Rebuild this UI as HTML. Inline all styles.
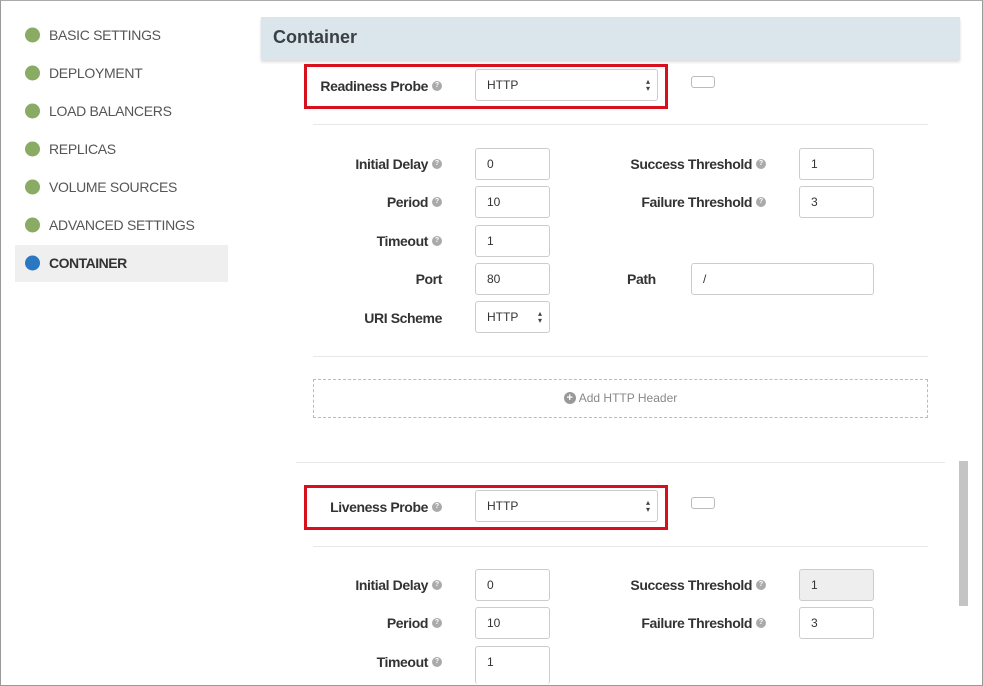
<!DOCTYPE html>
<html><head><meta charset="utf-8"><style>
*{box-sizing:border-box;margin:0;padding:0}
body{width:983px;height:686px;background:#fff;font-family:"Liberation Sans",sans-serif;position:relative;overflow:hidden}
.frame{position:absolute;left:0;top:0;width:983px;height:686px;border:1px solid #999;border-top-color:#aaa}
.a{position:absolute}
.nav{position:absolute;left:49px;font-size:14px;color:#555;letter-spacing:-0.3px;transform:translateY(-50%)}
.dot{position:absolute;left:25px;width:15px;height:15px;border-radius:50%;background:#8aab64;transform:translateY(-50%)}
.lbl{position:absolute;font-size:14px;font-weight:bold;color:#333;letter-spacing:-0.4px;white-space:nowrap;transform:translateY(-50%);text-align:right;line-height:16px}
.q{display:inline-block;width:10px;height:10px;border-radius:50%;background:#aaa;color:#fff;font-size:7px;line-height:10px;text-align:center;vertical-align:middle;margin-left:4px;font-weight:bold;position:relative;top:-1px;letter-spacing:0}
.in{position:absolute;border:1px solid #ccc;border-radius:3px;height:32px;font-size:12px;color:#333;padding-left:11px;line-height:30px;background:#fff}
.sel::after{content:"▴\A▾";white-space:pre;position:absolute;right:7px;top:8px;font-size:8px;line-height:7px;color:#444}
.hr{position:absolute;height:1px;background:#e8e8e8}
.red{position:absolute;border:3px solid #d8101e}
.tog{position:absolute;width:24px;height:12px;border:1px solid #bbb;border-radius:3px}
</style></head><body>
<div class="frame"></div>
<div class="a" style="left:15px;top:245px;width:213px;height:37px;background:#efefef"></div>
<div class="dot" style="top:35px"></div><div class="nav" style="top:35px">BASIC SETTINGS</div>
<div class="dot" style="top:73px"></div><div class="nav" style="top:73px">DEPLOYMENT</div>
<div class="dot" style="top:111px"></div><div class="nav" style="top:111px">LOAD BALANCERS</div>
<div class="dot" style="top:149px"></div><div class="nav" style="top:149px">REPLICAS</div>
<div class="dot" style="top:187px"></div><div class="nav" style="top:187px">VOLUME SOURCES</div>
<div class="dot" style="top:225px"></div><div class="nav" style="top:225px">ADVANCED SETTINGS</div>
<div class="dot" style="top:263px;background:#2a78c2"></div><div class="nav" style="top:263px;color:#333;font-weight:bold;letter-spacing:-0.5px">CONTAINER</div>

<div class="a" style="left:261px;top:17px;width:699px;height:43px;background:#dbe6ec;box-shadow:0 2px 3px rgba(0,0,0,0.15)"></div>
<div class="a" style="left:273px;top:27px;font-size:18px;font-weight:bold;color:#3a4045">Container</div>

<div class="red" style="left:304px;top:64px;width:364px;height:45px"></div>
<div class="lbl" style="right:541px;top:86px">Readiness Probe<span class="q">?</span></div>
<div class="in sel" style="left:475px;top:69px;width:183px">HTTP</div>
<div class="tog" style="left:691px;top:76px"></div>
<div class="hr" style="left:313px;top:124px;width:615px"></div>

<div class="lbl" style="right:541px;top:164px">Initial Delay<span class="q">?</span></div>
<div class="in" style="left:475px;top:148px;width:75px">0</div>
<div class="lbl" style="right:541px;top:202px">Period<span class="q">?</span></div>
<div class="in" style="left:475px;top:186px;width:75px">10</div>
<div class="lbl" style="right:541px;top:241px">Timeout<span class="q">?</span></div>
<div class="in" style="left:475px;top:225px;width:75px">1</div>
<div class="lbl" style="right:541px;top:279px">Port</div>
<div class="in" style="left:475px;top:263px;width:75px">80</div>
<div class="lbl" style="right:541px;top:318px">URI Scheme</div>
<div class="in sel" style="left:475px;top:301px;width:75px">HTTP</div>

<div class="lbl" style="right:217px;top:164px">Success Threshold<span class="q">?</span></div>
<div class="in" style="left:799px;top:148px;width:75px">1</div>
<div class="lbl" style="right:217px;top:202px">Failure Threshold<span class="q">?</span></div>
<div class="in" style="left:799px;top:186px;width:75px">3</div>
<div class="lbl" style="left:627px;top:279px">Path</div>
<div class="in" style="left:691px;top:263px;width:183px">/</div>

<div class="hr" style="left:313px;top:356px;width:615px"></div>
<div class="a" style="left:313px;top:379px;width:615px;height:39px;border:1px dashed #bbb;text-align:center;line-height:37px;font-size:12px;color:#888"><span style="display:inline-block;width:12px;height:12px;border-radius:50%;background:#999;color:#fff;font-size:11px;line-height:12px;font-weight:bold;vertical-align:middle;position:relative;top:-1px;margin-right:3px">+</span>Add HTTP Header</div>
<div class="hr" style="left:296px;top:462px;width:649px"></div>
<div class="a" style="left:959px;top:461px;width:9px;height:145px;background:#c4c4c4"></div>

<div class="red" style="left:304px;top:485px;width:364px;height:45px"></div>
<div class="lbl" style="right:541px;top:507px">Liveness Probe<span class="q">?</span></div>
<div class="in sel" style="left:475px;top:490px;width:183px">HTTP</div>
<div class="tog" style="left:691px;top:497px"></div>
<div class="hr" style="left:313px;top:546px;width:615px"></div>

<div class="lbl" style="right:541px;top:585px">Initial Delay<span class="q">?</span></div>
<div class="in" style="left:475px;top:569px;width:75px">0</div>
<div class="lbl" style="right:541px;top:623px">Period<span class="q">?</span></div>
<div class="in" style="left:475px;top:607px;width:75px">10</div>
<div class="lbl" style="right:541px;top:662px">Timeout<span class="q">?</span></div>
<div class="in" style="left:475px;top:646px;width:75px;height:38px;border-bottom:none">1</div>
<div class="lbl" style="right:217px;top:585px">Success Threshold<span class="q">?</span></div>
<div class="in" style="left:799px;top:569px;width:75px;background:#eee">1</div>
<div class="lbl" style="right:217px;top:623px">Failure Threshold<span class="q">?</span></div>
<div class="in" style="left:799px;top:607px;width:75px">3</div>
<div class="a" style="left:0;top:685px;width:983px;height:1px;background:#999"></div>
</body></html>
